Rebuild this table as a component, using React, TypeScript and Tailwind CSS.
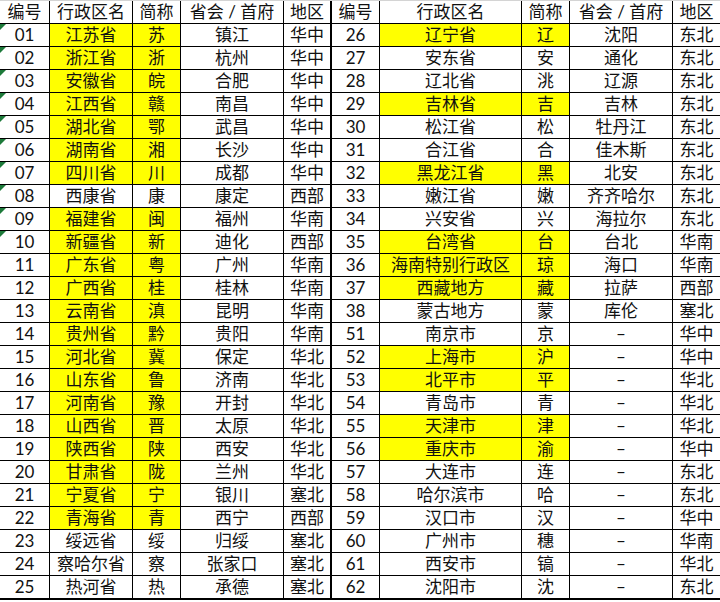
type Row = [string, string, string, string, string, boolean];

const left: Row[] = [
  ['01', '江苏省', '苏', '镇江', '华中', true],
  ['02', '浙江省', '浙', '杭州', '华中', true],
  ['03', '安徽省', '皖', '合肥', '华中', true],
  ['04', '江西省', '赣', '南昌', '华中', true],
  ['05', '湖北省', '鄂', '武昌', '华中', true],
  ['06', '湖南省', '湘', '长沙', '华中', true],
  ['07', '四川省', '川', '成都', '华中', true],
  ['08', '西康省', '康', '康定', '西部', false],
  ['09', '福建省', '闽', '福州', '华南', true],
  ['10', '新疆省', '新', '迪化', '西部', true],
  ['11', '广东省', '粤', '广州', '华南', true],
  ['12', '广西省', '桂', '桂林', '华南', true],
  ['13', '云南省', '滇', '昆明', '华南', true],
  ['14', '贵州省', '黔', '贵阳', '华南', true],
  ['15', '河北省', '冀', '保定', '华北', true],
  ['16', '山东省', '鲁', '济南', '华北', true],
  ['17', '河南省', '豫', '开封', '华北', true],
  ['18', '山西省', '晋', '太原', '华北', true],
  ['19', '陕西省', '陕', '西安', '华北', true],
  ['20', '甘肃省', '陇', '兰州', '华北', true],
  ['21', '宁夏省', '宁', '银川', '塞北', true],
  ['22', '青海省', '青', '西宁', '西部', true],
  ['23', '绥远省', '绥', '归绥', '塞北', false],
  ['24', '察哈尔省', '察', '张家口', '塞北', false],
  ['25', '热河省', '热', '承德', '塞北', false],
];

const right: Row[] = [
  ['26', '辽宁省', '辽', '沈阳', '东北', true],
  ['27', '安东省', '安', '通化', '东北', false],
  ['28', '辽北省', '洮', '辽源', '东北', false],
  ['29', '吉林省', '吉', '吉林', '东北', true],
  ['30', '松江省', '松', '牡丹江', '东北', false],
  ['31', '合江省', '合', '佳木斯', '东北', false],
  ['32', '黑龙江省', '黑', '北安', '东北', true],
  ['33', '嫩江省', '嫩', '齐齐哈尔', '东北', false],
  ['34', '兴安省', '兴', '海拉尔', '东北', false],
  ['35', '台湾省', '台', '台北', '华南', true],
  ['36', '海南特别行政区', '琼', '海口', '华南', true],
  ['37', '西藏地方', '藏', '拉萨', '西部', true],
  ['38', '蒙古地方', '蒙', '库伦', '塞北', false],
  ['51', '南京市', '京', '–', '华中', false],
  ['52', '上海市', '沪', '–', '华中', true],
  ['53', '北平市', '平', '–', '华北', true],
  ['54', '青岛市', '青', '–', '华北', false],
  ['55', '天津市', '津', '–', '华北', true],
  ['56', '重庆市', '渝', '–', '华中', true],
  ['57', '大连市', '连', '–', '东北', false],
  ['58', '哈尔滨市', '哈', '–', '东北', false],
  ['59', '汉口市', '汉', '–', '华中', false],
  ['60', '广州市', '穗', '–', '华南', false],
  ['61', '西安市', '镐', '–', '华北', false],
  ['62', '沈阳市', '沈', '–', '东北', false],
];

const header = ['编号', '行政区名', '简称', '省会 / 首府', '地区'];

// left half: 50 83 48 103 48 (last has the 2px divider), right half: 48 142 48 103 47
const leftW = ['w-[50px]', 'w-[83px]', 'w-[48px]', 'w-[103px]', 'w-[48px]'];
const rightW = ['w-[48px]', 'w-[142px]', 'w-[48px]', 'w-[103px]', 'w-[47px]'];

const Cell = ({
  text,
  w,
  yellow,
  divider,
  last,
  flag,
}: {
  text: string;
  w: string;
  yellow?: boolean;
  divider?: boolean;
  last?: boolean;
  flag?: boolean;
}) => (
  <div
    className={`relative flex items-center justify-center shrink-0 h-full border-black ${w} ${
      divider ? 'border-r-2' : last ? '' : 'border-r'
    } ${yellow ? 'bg-[#ffff00]' : ''}`}
  >
    {flag && (
      <span className="absolute left-0 top-0 w-0 h-0 border-t-[6px] border-r-[6px] border-t-[#1d7a3a] border-r-transparent" />
    )}
    <span className="whitespace-nowrap">{text}</span>
  </div>
);

const Half = ({ row, widths, side }: { row: Row; widths: string[]; side: 'l' | 'r' }) => {
  const [no, name, short, cap, region, hl] = row;
  const vals = [no, name, short, cap, region];
  return (
    <>
      {vals.map((v, i) => (
        <Cell
          key={i}
          text={v}
          w={widths[i]}
          yellow={hl && (i === 1 || i === 2)}
          divider={side === 'l' && i === 4}
          last={side === 'r' && i === 4}
          flag={side === 'l' && i === 0 && Number(no) <= 10}
        />
      ))}
    </>
  );
};

export default function App() {
  return (
    <div
      className="w-[720px] h-[602px] bg-white text-[#111] text-[17px] leading-[22px] overflow-hidden border-t border-[#d4d4d4]"
      style={{ fontFamily: 'Lato, "Noto Sans CJK SC", sans-serif' }}
    >
      <div className="flex h-[23px] border-b border-black">
        {header.map((h, i) => (
          <Cell key={'l' + i} text={h} w={leftW[i]} divider={i === 4} />
        ))}
        {header.map((h, i) => (
          <Cell key={'r' + i} text={h} w={rightW[i]} last={i === 4} />
        ))}
      </div>
      {left.map((row, idx) => (
        <div
          key={row[0]}
          className={`flex border-black ${idx === left.length - 1 ? 'h-[24px] border-b-2' : 'h-[23px] border-b'}`}
        >
          <Half row={row} widths={leftW} side="l" />
          <Half row={right[idx]} widths={rightW} side="r" />
        </div>
      ))}
    </div>
  );
}
